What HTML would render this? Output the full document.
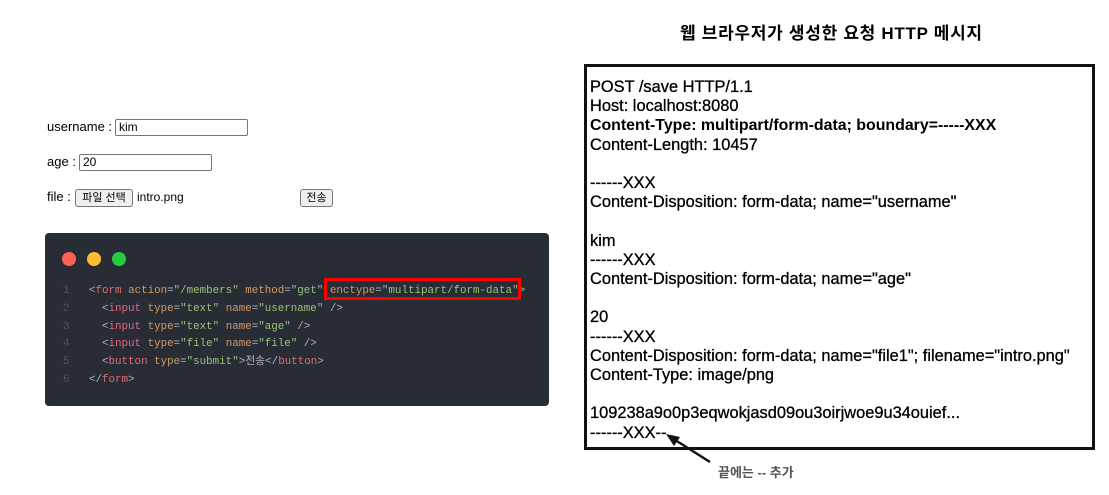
<!DOCTYPE html>
<html><head><meta charset="utf-8"><style>
body{margin:0;width:1109px;height:495px;background:#fff;position:relative;overflow:hidden;font-family:"Liberation Sans","Noto Sans CJK KR",sans-serif}
.a{position:absolute;white-space:pre}
.inp{position:absolute;border:1px solid #767676;border-radius:2px;font-size:12px;line-height:15px;padding-left:3px;box-sizing:border-box;height:17px}
.btn{position:absolute;border:1px solid #767676;border-radius:3px;background:#efefef;font-size:11px;height:18px;line-height:16px;text-align:center;box-sizing:border-box}
.code{position:absolute;left:45px;top:233px;width:504px;height:173px;background:#282c34;border-radius:4px}
.dot{position:absolute;top:252px;width:14px;height:14px;border-radius:50%}
.cl{position:absolute;font-family:"Liberation Mono","Noto Sans CJK KR",monospace;font-size:10.85px;color:#abb2bf;white-space:pre}
.n{color:#4b5263}.t{color:#e06c75}.at{color:#d19a66}.s{color:#98c379}
.r{position:absolute;left:584px;top:64px;width:511px;height:386px;border:3px solid #111;box-sizing:border-box}
.rt{position:absolute;left:590px;top:78px;font-size:16.4px;line-height:19.2px;color:#000;white-space:pre;-webkit-text-stroke:0.3px #000}
</style></head><body>
<div class="a" style="left:47px;top:119px;font-size:13px">username :</div>
<div class="inp" style="left:115px;top:119px;width:133px">kim</div>
<div class="a" style="left:47px;top:154px;font-size:13px">age :</div>
<div class="inp" style="left:79px;top:154px;width:133px">20</div>
<div class="a" style="left:47px;top:189px;font-size:13px">file :</div>
<div class="btn" style="left:75px;top:189px;width:58px">파일 선택</div>
<div class="a" style="left:137px;top:190px;font-size:12px">intro.png</div>
<div class="btn" style="left:300px;top:189px;width:33px">전송</div>

<div class="code"></div>
<div class="dot" style="left:62px;background:#ff5f56"></div>
<div class="dot" style="left:87px;background:#ffbd2e"></div>
<div class="dot" style="left:112px;background:#27c93f"></div>
<div class="cl" style="left:63px;top:283px;line-height:17.8px"><span class="n">1
2
3
4
5
6</span></div>
<div class="cl" style="left:89px;top:283px;line-height:17.8px">&lt;<span class="t">form</span> <span class="at">action</span>=<span class="s">"/members"</span> <span class="at">method</span>=<span class="s">"get"</span> <span class="at">enctype</span>=<span class="s">"multipart/form-data"</span>&gt;
  &lt;<span class="t">input</span> <span class="at">type</span>=<span class="s">"text"</span> <span class="at">name</span>=<span class="s">"username"</span> /&gt;
  &lt;<span class="t">input</span> <span class="at">type</span>=<span class="s">"text"</span> <span class="at">name</span>=<span class="s">"age"</span> /&gt;
  &lt;<span class="t">input</span> <span class="at">type</span>=<span class="s">"file"</span> <span class="at">name</span>=<span class="s">"file"</span> /&gt;
  &lt;<span class="t">button</span> <span class="at">type</span>=<span class="s">"submit"</span>&gt;전송&lt;/<span class="t">button</span>&gt;
&lt;/<span class="t">form</span>&gt;</div>
<div style="position:absolute;left:324px;top:278px;width:197px;height:22px;border:3px solid #f00;box-sizing:border-box"></div>

<div class="a" style="left:680px;top:19px;font-size:17px;font-weight:bold;letter-spacing:0.7px">웹 브라우저가 생성한 요청 HTTP 메시지</div>
<div class="r"></div>
<div class="rt">POST /save HTTP/1.1
Host: localhost:8080
<b style="-webkit-text-stroke:0;font-size:15.9px">Content-Type: multipart/form-data; boundary=-----XXX</b>
Content-Length: 10457

------XXX
Content-Disposition: form-data; name="username"

kim
------XXX
Content-Disposition: form-data; name="age"

20
------XXX
Content-Disposition: form-data; name="file1"; filename="intro.png"
Content-Type: image/png

109238a9o0p3eqwokjasd09ou3oirjwoe9u34ouief...
------XXX--</div>
<svg style="position:absolute;left:0;top:0" width="1109" height="495"><line x1="710" y1="462" x2="672" y2="438" stroke="#111" stroke-width="2.5"/><polygon points="666,434 680,437 674,446" fill="#111"/></svg>
<div class="a" style="left:718px;top:462px;font-size:13px;color:#555;font-weight:bold">끝에는 -- 추가</div>
</body></html>
